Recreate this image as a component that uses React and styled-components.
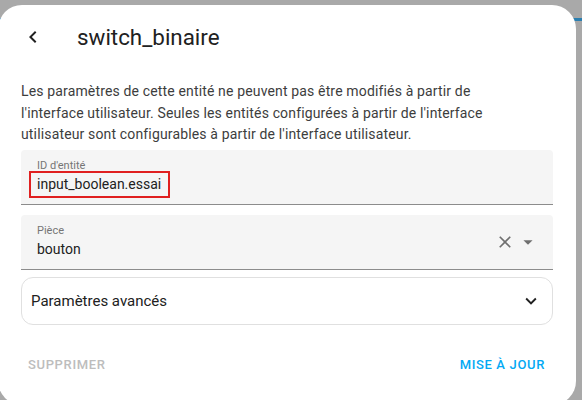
import styled, { createGlobalStyle } from "styled-components";

const GlobalStyle = createGlobalStyle`
  html, body {
    margin: 0;
    height: 100%;
    overflow: hidden;
  }
  body {
    background:
      linear-gradient(to bottom, transparent 18px, #2b7fb0 18px, #2b7fb0 21px, transparent 21px),
      #a9a9a9;
    font-family: Roboto, "Noto Sans", sans-serif;
    -webkit-font-smoothing: antialiased;
  }
`;

const BackIcon = () => (
  <svg width="24" height="24" viewBox="0 0 24 24">
    <path d="M15.41,16.58L10.83,12L15.41,7.41L14,6L8,12L14,18L15.41,16.58Z" fill="#212121" />
  </svg>
);

const CloseIcon = () => (
  <svg width="20" height="20" viewBox="0 0 24 24">
    <path
      d="M19,6.41L17.59,5L12,10.59L6.41,5L5,6.41L10.59,12L5,17.59L6.41,19L12,13.41L17.59,19L19,17.59L13.41,12L19,6.41Z"
      fill="#6f6f6f"
    />
  </svg>
);

const MenuDownIcon = () => (
  <svg width="22" height="22" viewBox="0 0 24 24">
    <path d="M7,10L12,15L17,10H7Z" fill="#6f6f6f" />
  </svg>
);

const ChevronDownIcon = () => (
  <svg width="22" height="22" viewBox="0 0 24 24">
    <path d="M7.41,8.58L12,13.17L16.59,8.58L18,10L12,16L6,10L7.41,8.58Z" fill="#212121" />
  </svg>
);

const TextField = ({ label, value, highlight, children }) => (
  <Field>
    <FieldBody>
      <FieldLabel>{label}</FieldLabel>
      <FieldValue $highlight={highlight}>{value}</FieldValue>
    </FieldBody>
    {children && <FieldIcons>{children}</FieldIcons>}
  </Field>
);

export default function App() {
  return (
    <>
      <GlobalStyle />
      <Dialog>
        <Header>
          <IconButton>
            <BackIcon />
          </IconButton>
          <Title>switch_binaire</Title>
        </Header>
        <Content>
          <Description>
            Les paramètres de cette entité ne peuvent pas être modifiés à partir de
            l'interface utilisateur. Seules les entités configurées à partir de l'interface
            utilisateur sont configurables à partir de l'interface utilisateur.
          </Description>
          <TextField label="ID d'entité" value="input_boolean.essai" highlight />
          <TextField label="Pièce" value="bouton">
            <CloseIcon />
            <MenuDownIcon />
          </TextField>
          <Expansion>
            <span>Paramètres avancés</span>
            <ChevronDownIcon />
          </Expansion>
        </Content>
        <Actions>
          <TextButton $disabled>Supprimer</TextButton>
          <TextButton>Mise à jour</TextButton>
        </Actions>
      </Dialog>
    </>
  );
}

const Dialog = styled.div`
  width: 578px;
  height: 400px;
  margin: 5px 0 0 -2px;
  background: #fff;
  border-radius: 24px;
  display: flex;
  flex-direction: column;
  box-sizing: border-box;
`;

const Header = styled.div`
  display: flex;
  align-items: center;
  height: 34px;
  padding: 15px 0 0 23px;
`;

const IconButton = styled.div`
  width: 24px;
  height: 24px;
  display: flex;
  margin-right: 32px;
`;

const Title = styled.h2`
  margin: 0;
  font-size: 22.4px;
  font-weight: 400;
  color: #212121;
  line-height: 28px;
`;

const Content = styled.div`
  padding: 27px 23px 0 23px;
  display: flex;
  flex-direction: column;
`;

const Description = styled.p`
  margin: 0 0 4px;
  max-width: 500px;
  font-size: 14px;
  letter-spacing: 0.15px;
  line-height: 21.5px;
  color: #3d3d3d;
`;

const Field = styled.div`
  display: flex;
  align-items: center;
  height: 55px;
  box-sizing: border-box;
  padding: 0 14px 0 16px;
  background: #f5f5f5;
  border-radius: 4px 4px 0 0;
  border-bottom: 1px solid #8c8c8c;
  & + & {
    margin-top: 10px;
  }
`;

const FieldBody = styled.div`
  flex: 1;
  align-self: stretch;
  display: flex;
  flex-direction: column;
  align-items: flex-start;
  padding-top: 10px;
`;

const FieldLabel = styled.span`
  font-size: 11px;
  line-height: 12px;
  color: #757575;
`;

const FieldValue = styled.span`
  margin-top: 1px;
  font-size: 14px;
  line-height: 23px;
  color: #212121;
  ${(p) =>
    p.$highlight &&
    `
    border: 2px solid #e02020;
    padding: 0 6.5px;
    margin: -1px 0 0 -8.5px;
  `}
`;

const FieldIcons = styled.div`
  display: flex;
  align-items: center;
  gap: 2px;
`;

const Expansion = styled.div`
  margin-top: 7px;
  height: 48px;
  box-sizing: border-box;
  border: 1px solid #e0e0e0;
  border-radius: 12px;
  display: flex;
  align-items: center;
  justify-content: space-between;
  padding: 0 10px 0 9px;
  font-size: 15px;
  font-weight: 400;
  color: #212121;
`;

const Actions = styled.div`
  display: flex;
  justify-content: space-between;
  align-items: center;
  padding: 32px 31px 0 30px;
`;

const TextButton = styled.span`
  font-size: 13px;
  font-weight: 500;
  letter-spacing: 0.65px;
  text-transform: uppercase;
  color: ${(p) => (p.$disabled ? "#bdbdbd" : "#03a9f4")};
`;
